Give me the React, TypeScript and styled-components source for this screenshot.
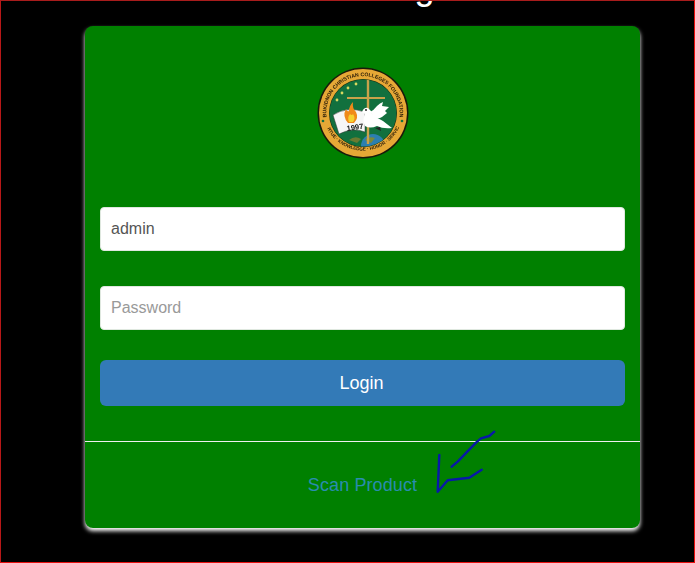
import styled, { createGlobalStyle } from 'styled-components';

const GlobalStyle = createGlobalStyle`
  html,
  body {
    margin: 0;
    padding: 0;
    background: #000;
  }
`;

const Frame = styled.div`
  position: relative;
  box-sizing: border-box;
  width: 695px;
  height: 563px;
  overflow: hidden;
  background: #000;
  border: 1px solid #e81010;
  border-top-color: #a81c1c;
  border-left-color: #b81818;
  font-family: 'Liberation Sans', Arial, sans-serif;
`;

const Heading = styled.h1`
  height: 25px;
  margin: 0 0 0 84px;
  width: 555px;
  color: #fff;
  font-size: 36px;
  font-weight: 400;
  line-height: 1;
  text-align: center;
  transform: translateY(-32px);
`;

const Card = styled.div`
  box-sizing: border-box;
  width: 555px;
  height: 502px;
  margin-left: 84px;
  display: flex;
  flex-direction: column;
  background: #008000;
  border-radius: 8px;
  box-shadow: 0 3px 4px #fff;
`;

const LogoRow = styled.div`
  display: flex;
  justify-content: center;
  padding-top: 40px;
  height: 181px;
  box-sizing: border-box;
`;

const SealGraphic = styled.svg`
  filter: blur(0.35px);
`;

const Form = styled.form`
  display: flex;
  flex-direction: column;
  padding: 0 15px;
`;

const Field = styled.input`
  box-sizing: border-box;
  width: 100%;
  height: 44px;
  margin-bottom: 35px;
  padding: 0 10px;
  border: 1px solid #dfe8df;
  border-radius: 4px;
  background: #fff;
  color: #555;
  font-family: inherit;
  font-size: 16px;
  outline: none;

  &::placeholder {
    color: #999;
    opacity: 1;
  }
`;

const LoginButton = styled.button`
  height: 46px;
  margin-top: -5px;
  border: 0;
  border-radius: 6px;
  background: #337ab7;
  color: #fff;
  font-family: inherit;
  font-size: 18px;
  padding: 0 2px 0 0;
`;

const Divider = styled.hr`
  width: 100%;
  height: 1px;
  margin: 35px 0 0;
  border: 0;
  background: #eee;
`;

const Footer = styled.div`
  flex: 1;
  display: flex;
  justify-content: center;
  padding-top: 33px;
`;

const ScanLink = styled.a`
  color: #2a8cb0;
  font-size: 18px;
  line-height: 20px;
  letter-spacing: 0.1px;
  text-decoration: none;
`;

const Scribble = styled.svg`
  position: absolute;
  left: 430px;
  top: 424px;
  pointer-events: none;
`;

const Seal = () => (
  <SealGraphic width="96" height="96" viewBox="0 0 96 96">
    <defs>
      <path id="seal-top" d="M12 54 A36.7 36.7 0 1 1 84 54" />
      <path id="seal-bottom" d="M12 62 A40 40 0 0 0 84 62" />
      <clipPath id="seal-inner">
        <circle cx="48" cy="47" r="33.5" />
      </clipPath>
    </defs>
    <circle cx="48" cy="47" r="45.5" fill="#1a1a0a" />
    <circle cx="48" cy="47" r="44" fill="#e6a836" />
    <circle cx="48" cy="47" r="34" fill="#1a2a10" />
    <circle cx="48" cy="47" r="33.5" fill="#12703e" />
    <text fontFamily="'Liberation Sans', sans-serif" fontSize="5.2" fill="#2a1c08" fontWeight="700">
      <textPath href="#seal-top" startOffset="50%" textAnchor="middle">
        BUKIDNON CHRISTIAN COLLEGES FOUNDATION
      </textPath>
    </text>
    <text fontFamily="'Liberation Sans', sans-serif" fontSize="4.6" fill="#2a1c08" fontWeight="700">
      <textPath href="#seal-bottom" startOffset="50%" textAnchor="middle">
        VIRTUE · KNOWLEDGE · HONOR · SERVICE
      </textPath>
    </text>
    <circle cx="8" cy="55" r="1.3" fill="#12703e" />
    <circle cx="87" cy="55" r="1.3" fill="#12703e" />
    <g clipPath="url(#seal-inner)">
      <circle cx="58" cy="80" r="12" fill="#2c7fb0" />
      <path d="M50 74 Q54 70 60 72 L56 77 Z" fill="#7a8a3a" />
      <path d="M34 74 Q40 69 46 73 L42 77 Z" fill="#6a7a30" />
      <rect x="51.8" y="12" width="2.4" height="66" fill="#c9a24a" />
      <rect x="32" y="31" width="38" height="2" fill="#c9a24a" />
    </g>
    <g fill="#d8d860">
      <circle cx="22" cy="34" r="1.4" />
      <circle cx="27" cy="27" r="1.4" />
      <circle cx="33" cy="22" r="1.4" />
      <circle cx="41" cy="18" r="1.4" />
    </g>
    <path d="M18 49 Q32 40 50 46 L50 66 Q38 61 24 68 Z" fill="#f6f6f6" stroke="#333" strokeWidth="0.5" />
    <path d="M33 57 Q27 50 31 43 Q32 46 34 45 Q34 40 38 36 Q37 42 41 46 Q44 52 39 57 Z" fill="#f08a1a" />
    <path d="M34 56 Q32 51 35 48 Q37 50 38 48 Q41 52 38 56 Z" fill="#f6d030" />
    <text x="32" y="65" fontFamily="'Liberation Sans', sans-serif" fontSize="7.5" fontWeight="700" fill="#111" transform="rotate(-8 32 65)">
      1997
    </text>
    <g fill="#fff">
      <path d="M47 46 Q49 41 53 42 Q56 44 57 48 Q62 52 68 55 L77 62 Q68 63 62 60 Q55 63 50 60 Q47 54 50 48 Z" />
      <path d="M55 46 Q59 44 62 40 Q65 37 68 36 L67 40 L74 41 L70 45 L72 47 L67 51 Q62 54 58 50 Z" />
    </g>
    <circle cx="51" cy="44" r="0.9" fill="#111" />
    <path d="M60 62 L65 61 L66 65 Z" fill="#222" />
  </SealGraphic>
);

export default function App() {
  return (
    <>
      <GlobalStyle />
      <Frame>
        <Heading>Admin Login</Heading>
        <Card>
          <LogoRow>
            <Seal />
          </LogoRow>
          <Form onSubmit={(e) => e.preventDefault()}>
            <Field type="text" defaultValue="admin" placeholder="Username" />
            <Field type="password" placeholder="Password" />
            <LoginButton type="submit">Login</LoginButton>
          </Form>
          <Divider />
          <Footer>
            <ScanLink href="#">Scan Product</ScanLink>
          </Footer>
        </Card>
        <Scribble width="70" height="70" viewBox="430 424 70 70" fill="none" stroke="#0818a8" strokeWidth="2.4" strokeLinecap="round" strokeLinejoin="round">
          <path d="M438.3 454 L436.7 490.7 L446.7 479.3 L468.3 476.7 L480.7 468.7" />
          <path d="M450.7 465.7 L456.7 460.7 L475 441.7 L480 437.3 L488.3 435 L493.3 430.7" />
        </Scribble>
      </Frame>
    </>
  );
}
